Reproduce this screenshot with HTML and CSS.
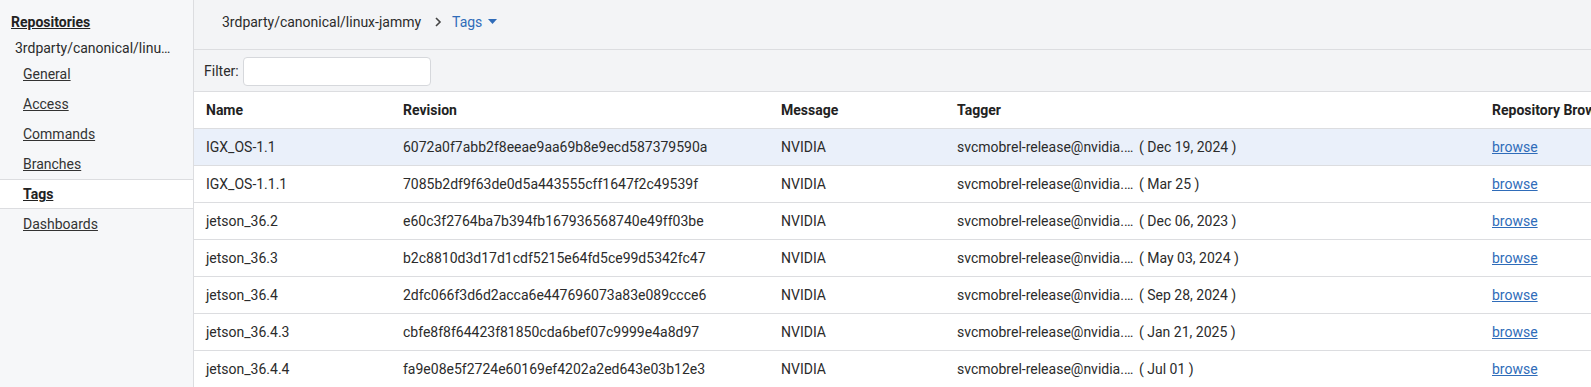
FILE: index.html
```html
<!DOCTYPE html>
<html lang="en">
  <head>
    <meta charset="UTF-8" />
    <title>linux-jammy - Tags</title>
    <link rel="stylesheet" href="styles.css">
  </head>
  <body>
    <div class="layout">
      <!-- Left navigation -->
      <aside class="sidebar">
        <a href="#" class="side-title">Repositories</a>
        <div class="side-repo">3rdparty/canonical/linux-jammy</div>
        <ul class="side-nav">
          <li><a href="#">General</a></li>
          <li><a href="#">Access</a></li>
          <li><a href="#">Commands</a></li>
          <li><a href="#">Branches</a></li>
          <li class="active"><a href="#">Tags</a></li>
          <li><a href="#">Dashboards</a></li>
        </ul>
      </aside>

      <main class="content">
        <div class="breadcrumb">
          <span class="crumb">3rdparty/canonical/linux-jammy</span>
          <svg class="crumb-sep" width="8" height="10" viewBox="0 0 8 10">
            <polyline points="2,1 6,5 2,9" fill="none" stroke="#444" stroke-width="1.6" />
          </svg>
          <a href="#" class="crumb-menu">Tags
            <svg width="9" height="5" viewBox="0 0 9 5"><polygon points="0,0 9,0 4.5,5" fill="#2f6cb9" /></svg>
          </a>
        </div>

        <div class="filter-bar">
          <label for="filter">Filter:</label>
          <input type="text" id="filter" />
        </div>

        <div class="table-wrap">
          <table class="tags">
            <colgroup>
              <col style="width: 197px" />
              <col style="width: 378px" />
              <col style="width: 176px" />
              <col style="width: 535px" />
              <col style="width: 240px" />
            </colgroup>
            <thead>
              <tr>
                <th>Name</th>
                <th>Revision</th>
                <th>Message</th>
                <th>Tagger</th>
                <th>Repository Browser</th>
              </tr>
            </thead>
            <tbody id="tagRows"></tbody>
          </table>
        </div>
      </main>
    </div>

    <script>
      const tags = [
        ["IGX_OS-1.1", "6072a0f7abb2f8eeae9aa69b8e9ecd587379590a", "Dec 19, 2024"],
        ["IGX_OS-1.1.1", "7085b2df9f63de0d5a443555cff1647f2c49539f", "Mar 25"],
        ["jetson_36.2", "e60c3f2764ba7b394fb167936568740e49ff03be", "Dec 06, 2023"],
        ["jetson_36.3", "b2c8810d3d17d1cdf5215e64fd5ce99d5342fc47", "May 03, 2024"],
        ["jetson_36.4", "2dfc066f3d6d2acca6e447696073a83e089ccce6", "Sep 28, 2024"],
        ["jetson_36.4.3", "cbfe8f8f64423f81850cda6bef07c9999e4a8d97", "Jan 21, 2025"],
        ["jetson_36.4.4", "fa9e08e5f2724e60169ef4202a2ed643e03b12e3", "Jul 01"],
      ];

      const tbody = document.getElementById("tagRows");
      tags.forEach(([name, rev, date], i) => {
        const tr = document.createElement("tr");
        if (i === 0) tr.className = "hover";
        tr.innerHTML =
          "<td>" + name + "</td>" +
          "<td>" + rev + "</td>" +
          "<td>NVIDIA</td>" +
          '<td><span class="tagger">svcmobrel-release@nvidia.com</span>' +
          '<span class="tag-date">( ' + date + " )</span></td>" +
          '<td><a href="#">browse</a></td>';
        tbody.appendChild(tr);
      });
    </script>
  </body>
</html>
```

FILE: styles.css
```css
html,
body {
  margin: 0;
  padding: 0;
  height: 100%;
  overflow: hidden;
}
body {
  font-family: Roboto, "Liberation Sans", sans-serif;
  font-size: 14px;
  color: #2b2b2b;
  background: #fff;
}
a {
  color: inherit;
}
.layout {
  display: flex;
  height: 100%;
}

/* sidebar */
.sidebar {
  flex: 0 0 193px;
  width: 193px;
  min-width: 0;
  background: #f6f7f9;
  border-right: 1px solid #dcdde0;
  padding-top: 12px;
}
.side-title {
  display: block;
  margin-left: 11px;
  line-height: 20px;
  font-weight: bold;
  color: #222;
}
.side-repo {
  margin: 6px 20px 1px 15px;
  line-height: 20px;
  white-space: nowrap;
  overflow: hidden;
  text-overflow: ellipsis;
  color: #2b2b2b;
}
.side-nav {
  list-style: none;
  margin: 0;
  padding: 0;
}
.side-nav li {
  line-height: 30px;
  padding-left: 23px;
}
.side-nav li a {
  color: #333;
}
.side-nav li.active {
  background: #fff;
  line-height: 28px;
  border-top: 1px solid #dcdde0;
  border-bottom: 1px solid #dcdde0;
}
.side-nav li.active a {
  font-weight: bold;
  color: #222;
}

/* main */
.content {
  flex: 1;
  min-width: 0;
  overflow: hidden;
}
.breadcrumb {
  display: flex;
  align-items: center;
  box-sizing: border-box;
  height: 50px;
  padding: 0 0 6px 28px;
  background: #f3f4f6;
  border-bottom: 1px solid #dcdde0;
}
.crumb {
  color: #2b2b2b;
}
.crumb-sep {
  margin: 0 10px 0 13px;
}
.crumb-menu {
  color: #2f6cb9;
  text-decoration: none;
  display: flex;
  align-items: center;
  gap: 6px;
}
.filter-bar {
  display: flex;
  align-items: center;
  gap: 4px;
  height: 41px;
  padding-left: 10px;
  background: #f3f4f6;
  border-bottom: 1px solid #dcdde0;
}
.filter-bar label {
  color: #2b2b2b;
}
.filter-bar input {
  width: 188px;
  height: 29px;
  box-sizing: border-box;
  border: 1px solid #d6d8dc;
  border-radius: 4px;
  background: #fff;
  margin: 1px 0 0;
}

/* table */
.tags {
  border-collapse: collapse;
  table-layout: fixed;
  width: 1526px;
}
.tags th,
.tags td {
  height: 36px;
  padding: 0 0 0 12px;
  text-align: left;
  border-bottom: 1px solid #dcdde0;
  white-space: nowrap;
  overflow: hidden;
}
.tags th {
  font-weight: bold;
  color: #222;
}
.tags tr.hover td {
  background: #eaf0fa;
}
.tagger {
  display: inline-block;
  vertical-align: top;
  max-width: 177px;
  overflow: hidden;
  text-overflow: ellipsis;
}
.tag-date {
  margin-left: 5px;
}
.tags td a {
  color: #2f6cb9;
}
```
